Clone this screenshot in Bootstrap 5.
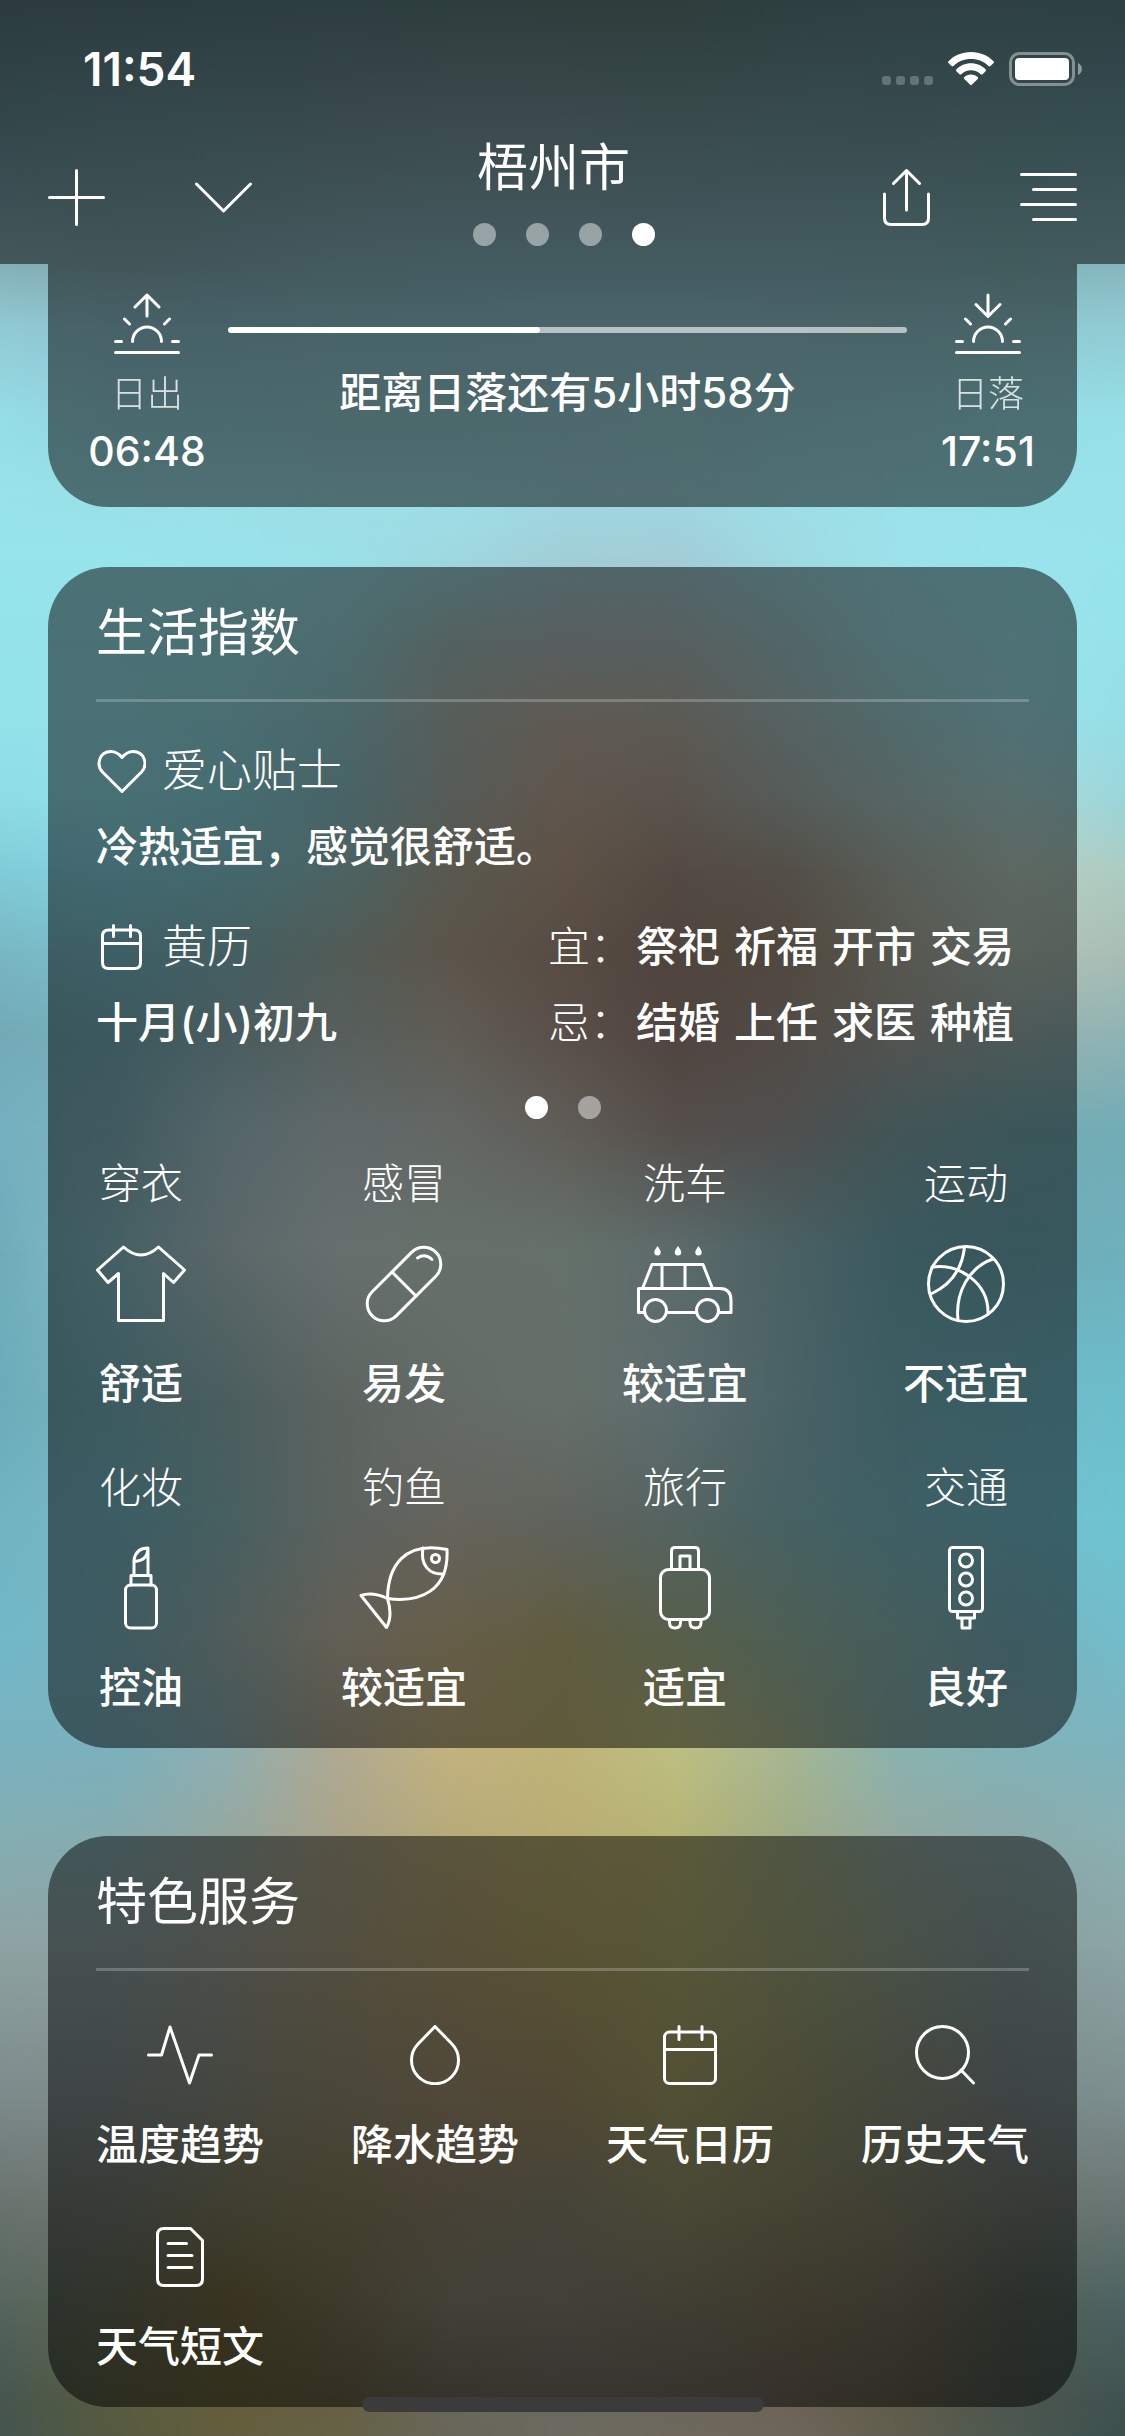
<!DOCTYPE html>
<html lang="zh-CN">
<head>
<meta charset="utf-8">
<meta name="viewport" content="width=device-width, initial-scale=1">
<title>天气</title>
<link href="https://cdn.jsdelivr.net/npm/bootstrap@5.3.0/dist/css/bootstrap.min.css" rel="stylesheet">
<script src="https://cdn.jsdelivr.net/npm/bootstrap@5.3.0/dist/js/bootstrap.bundle.min.js"></script>
<style>
  body { font-family: Inter, "Noto Sans CJK SC", sans-serif; color: #fff; background: #3b4b4c; font-size: 42px; line-height: 60px; }
  svg { fill: none; stroke: #fff; stroke-width: 3; stroke-linecap: round; stroke-linejoin: round; display: block; flex: none; }
  .thin { font-weight: 300; }
  .medium { font-weight: 500; }

  /* blurred photo behind everything: stacked colour bands that fade into each other */
  .screen { isolation: isolate; }
  .sky { position: absolute; inset: 0; z-index: -1; overflow: hidden; }
  .sky div { position: absolute; left: 0; right: 0; bottom: 0; }

  .app-top { background: rgba(0,0,0,.5); height: 264px; }
  .status { padding: 39px 43px 0 83px; }
  .status-icons { gap: 15px; }
  .clock { font-size: 46px; font-weight: 600; }
  .tools { padding: 39px 48px 0; }
  .tool-group { gap: 90px; }
  .tool { border: 0; background: none; padding: 0; color: inherit; }
  .city { padding-bottom: 11px; }
  .city-name { padding-right: 20px; margin-bottom: 25px; }
  .big { font-size: 51px; line-height: 60px; font-weight: 400; }
  .dots { gap: 30px; }
  .dot { width: 23px; height: 23px; border-radius: 50%; background: rgba(255,255,255,.45); border: 0; padding: 0; }
  .dot.on { background: #fff; }

  .panel { margin: 0 48px 60px; background: rgba(0,0,0,.5); border-radius: 60px; padding: 36px 48px 30px; }
  .panel-sun { border-radius: 0 0 60px 60px; padding: 29px 30px 26px 40px; }
  .panel-life { margin-bottom: 88px; }
  .panel-service { margin-bottom: 29px; }
  .sun-side { width: 118px; }
  .sun-name { font-size: 36px; line-height: 54px; opacity: .8; margin-top: 12px; }
  .sun-time { font-size: 41px; font-weight: 500; }
  .sun-mid { padding: 34px 22px 0; }
  .track { height: 6px; border-radius: 3px; background: rgba(255,255,255,.6); margin-bottom: 30px; }
  .track .progress-bar { background: #fff; border-radius: 3px; }

  .rule { height: 3px; background: rgba(255,255,255,.22); margin-top: 36px; }
  .sub { font-size: 45px; gap: 16px; }
  .tips { margin-top: 39px; }
  .second { margin-top: 16px; }
  .almanac-row { margin-top: 40px; padding-right: 15px; }
  .words { gap: 14px; }
  .pager { margin: 43px 0 35px; }
  .four { display: grid; grid-template-columns: repeat(4, auto); justify-content: space-between; text-align: center; }
  .four-index { row-gap: 44px; }
  .four-service { row-gap: 52px; margin-top: 54px; }
  .pic { height: 140px; }
  .service { color: #fff; text-decoration: none; }
  .service svg { margin: 0 auto 30px; }
  .home-bar { position: absolute; bottom: 24px; left: 0; right: 0; margin: 0 auto; width: 402px; height: 15px; border-radius: 8px; background: #3c3b3c; }
</style>
</head>
<body>
<div class="screen position-relative overflow-hidden">
  <div class="sky" id="sky" aria-hidden="true"></div>

  <header class="app-top">
    <div class="status d-flex align-items-center justify-content-between">
      <div class="clock">11:54</div>
      <div class="status-icons d-flex align-items-center">
        <svg width="51" height="34" viewBox="0 0 51 34"><g fill="#fff" fill-opacity=".24" stroke="none"><rect x="0" y="24" width="9" height="9" rx="3"/><rect x="14" y="24" width="9" height="9" rx="3"/><rect x="28" y="24" width="9" height="9" rx="3"/><rect x="42" y="24" width="9" height="9" rx="3"/></g></svg>
        <svg width="46" height="34" viewBox="0 0 46 34"><g fill="#fff" stroke="none"><path d="M23 0C32 0 40 3.500 45.500 9.200q.9 1 0 1.900l-3 3q-.9.800-1.900 0C36 9.500 30 7 23 7S10 9.500 5.400 14.100q-1 .8-1.900 0l-3-3q-.9-.9 0-1.900C6 3.500 14 0 23 0z"/><path d="M23 11.300c5.700 0 10.800 2.300 14.600 6q.9.900 0 1.900l-3 3q-.9.800-1.900 0C30 19.700 27 18.200 23 18.200s-7 1.500-9.700 4q-1 .8-1.900 0l-3-3q-.9-1 0-1.900c3.800-3.700 8.900-6 14.600-6z"/><path d="M23 22.500c2.600 0 4.900 1 6.700 2.600q.9.900 0 1.800l-5.900 5.900q-.8.700-1.600 0l-5.900-5.900q-.9-.9 0-1.800c1.800-1.600 4.100-2.600 6.700-2.600z"/></g></svg>
        <svg width="73" height="34" viewBox="0 0 73 34"><rect x="1.500" y="1.500" width="63" height="31" rx="9" stroke-opacity=".4"/><rect x="6" y="6" width="54" height="22" rx="4" fill="#fff" stroke="none"/><path d="M69 11c2.500 1.200 4 3.500 4 6s-1.500 4.800-4 6z" fill="#fff" fill-opacity=".45" stroke="none"/></svg>
      </div>
    </div>
    <div class="tools d-flex align-items-center justify-content-between">
      <div class="tool-group d-flex align-items-center">
        <button class="tool" type="button" aria-label="添加"><svg width="57" height="57" viewBox="0 0 57 57"><path d="M28.500 1.500v54M1.500 28.500h54"/></svg></button>
        <button class="tool" type="button" aria-label="展开"><svg width="57" height="57" viewBox="0 0 57 57"><path d="M1.500 15l27 27 27-27"/></svg></button>
      </div>
      <div class="city d-flex flex-column align-items-center me-2">
        <h1 class="big city-name">梧州市</h1>
        <div class="dots d-flex"><span class="dot"></span><span class="dot"></span><span class="dot"></span><span class="dot on"></span></div>
      </div>
      <div class="tool-group d-flex align-items-center">
        <button class="tool" type="button" aria-label="分享"><svg width="47" height="57" viewBox="0 0 47 57"><path d="M23.500 41V1.500M10.500 14.500l13-13 13 13M1.500 25v24q0 6.500 6.500 6.500h31q6.500 0 6.500-6.500V25"/></svg></button>
        <button class="tool" type="button" aria-label="菜单"><svg width="57" height="57" viewBox="0 0 57 57"><path d="M1.500 5.500h54M13.500 20.500h42M1.500 35.500h54M13.500 50.500h42"/></svg></button>
      </div>
    </div>
  </header>

  <main>
    <section class="panel panel-sun d-flex">
      <div class="sun-side text-center">
        <svg class="mx-auto" width="66" height="62" viewBox="0 0 66 62"><path d="M1.500 59.500h63M1.500 48.500h6M58.500 48.500h6M18.500 48.500a14.500 14.500 0 0 1 29 0M10.500 26l5 5M55.500 26l-5 5M33 23V2M21 14L33 2l12 12"/></svg>
        <div class="sun-name thin">日出</div>
        <div class="sun-time">06:48</div>
      </div>
      <div class="sun-mid flex-grow-1 text-center">
        <div class="track progress" role="progressbar" aria-label="日照进度" aria-valuenow="46" aria-valuemin="0" aria-valuemax="100"><div class="progress-bar" style="width:46%"></div></div>
        <div class="medium">距离日落还有5小时58分</div>
      </div>
      <div class="sun-side text-center">
        <svg class="mx-auto" width="66" height="62" viewBox="0 0 66 62"><path d="M1.500 59.500h63M1.500 48.500h6M58.500 48.500h6M18.500 48.500a14.500 14.500 0 0 1 29 0M10.500 26l5 5M55.500 26l-5 5M33 2v21M21 11.500l12 12 12-12"/></svg>
        <div class="sun-name thin">日落</div>
        <div class="sun-time">17:51</div>
      </div>
    </section>

    <section class="panel panel-life">
      <h2 class="big mb-0">生活指数</h2>
      <div class="rule"></div>
      <div class="tips sub thin d-flex align-items-center"><svg width="50" height="44" viewBox="0 0 50 44"><path d="M26 42.500L6.500 23C0 16 3 2.500 15 2.500c5 0 8 2.500 11 6 3-3.500 6-6 11-6 12 0 15 13.500 8.500 20.500z"/></svg><span>爱心贴士</span></div>
      <div class="medium second">冷热适宜，感觉很舒适。</div>
      <div class="almanac-row d-flex justify-content-between">
        <div>
          <div class="sub thin d-flex align-items-center"><svg width="50" height="46" viewBox="0 0 50 46"><path d="M6.500 19.500h38M17.500 1.500v11M34.500 1.500v11M12.500 6h26q6 0 6 6v26.500q0 6-6 6h-26q-6 0-6-6V12q0-6 6-6z"/></svg><span>黄历</span></div>
          <div class="medium second">十月(小)初九</div>
        </div>
        <div>
          <div class="d-flex"><span class="thin me-1">宜：</span><div class="words medium d-flex"><span>祭祀</span><span>祈福</span><span>开市</span><span>交易</span></div></div>
          <div class="second d-flex"><span class="thin me-1">忌：</span><div class="words medium d-flex"><span>结婚</span><span>上任</span><span>求医</span><span>种植</span></div></div>
        </div>
      </div>
      <div class="pager dots d-flex justify-content-center"><span class="dot on"></span><span class="dot"></span></div>

      <div class="four four-index">
        <div>
          <div class="thin">穿衣</div>
          <div class="pic d-flex align-items-center justify-content-center"><svg width="90" height="78" viewBox="0 0 90 78"><path d="M27.500 2L1.500 25 12 37.500l10.500-9v47h45v-47l10 9L88.500 25 62.500 2Q45 18 27.500 2z"/></svg></div>
          <div class="medium">舒适</div>
        </div>
        <div>
          <div class="thin">感冒</div>
          <div class="pic d-flex align-items-center justify-content-center"><svg width="78" height="78" viewBox="0 0 78 78"><g transform="rotate(-45 39 39)"><rect x="-6" y="22" width="90" height="34" rx="17"/><path d="M39 22v34"/></g><path d="M52.500 13q7.500-5 14.500 1.500"/></svg></div>
          <div class="medium">易发</div>
        </div>
        <div>
          <div class="thin">洗车</div>
          <div class="pic d-flex align-items-center justify-content-center"><svg width="96" height="78" viewBox="0 0 96 78"><path d="M5.500 43.500l9.500-24h51l9.500 24M25 19.500v24M48 19.500v24M7 67.500H1.500v-24H83q11 0 11 12v12H82M59 67.500H30"/><circle cx="18.500" cy="65.500" r="11"/><circle cx="70.500" cy="65.500" r="11"/><g fill="#fff" stroke="none"><path d="M20.500 1c1.500 2.500 3.200 4 3.200 6.200a3.200 3.200 0 0 1-6.400 0C17.300 5 19 3.500 20.500 1z"/><path d="M41 1c1.500 2.500 3.200 4 3.200 6.200a3.200 3.200 0 0 1-6.400 0C37.800 5 39.500 3.500 41 1z"/><path d="M61.500 1c1.500 2.500 3.200 4 3.200 6.200a3.200 3.200 0 0 1-6.400 0C58.300 5 60 3.500 61.500 1z"/></g></svg></div>
          <div class="medium">较适宜</div>
        </div>
        <div>
          <div class="thin">运动</div>
          <div class="pic d-flex align-items-center justify-content-center"><svg width="78" height="78" viewBox="0 0 78 78"><circle cx="39" cy="39" r="37.500"/><path d="M37.500 2Q34 35 4 49M5 22C32 18 62 38 61 69M66 14C42 22 28 48 31 75"/></svg></div>
          <div class="medium">不适宜</div>
        </div>
        <div>
          <div class="thin">化妆</div>
          <div class="pic d-flex align-items-center justify-content-center"><svg width="34" height="84" viewBox="0 0 34 84"><rect x="1.500" y="39" width="31" height="43" rx="5"/><path d="M7 39v-9.500h20V39M10 29.500V14Q12 2 24 2v27.500M24 3q-1 12-13.500 12.500"/></svg></div>
          <div class="medium">控油</div>
        </div>
        <div>
          <div class="thin">钓鱼</div>
          <div class="pic d-flex align-items-center justify-content-center"><svg width="90" height="84" viewBox="0 0 90 84"><path d="M88 3.500C45-5 29 20 28.500 52.500M88 3.500C90 44 62 57 28.500 52.500 19 48 9 47 2 49.500l25.500 32Q34 70 28.500 52.500M64 2C61 20 71 29 85 28"/><circle cx="76.500" cy="12.500" r="4"/></svg></div>
          <div class="medium">较适宜</div>
        </div>
        <div>
          <div class="thin">旅行</div>
          <div class="pic d-flex align-items-center justify-content-center"><svg width="52" height="84" viewBox="0 0 52 84"><rect x="1.500" y="23.500" width="49" height="50" rx="8"/><path d="M12.500 23.500V5q0-3.500 3.500-3.500h20q3.500 0 3.500 3.500v18.500M21 23.500V10h10v13.500M10.500 73.500v3q0 5.500 5.500 5.500t5.500-5.500v-3M31 73.500v3q0 5.500 5.500 5.500t5.500-5.500v-3"/></svg></div>
          <div class="medium">适宜</div>
        </div>
        <div>
          <div class="thin">交通</div>
          <div class="pic d-flex align-items-center justify-content-center"><svg width="36" height="84" viewBox="0 0 36 84"><rect x="1.500" y="1.500" width="33" height="64" rx="3"/><circle cx="18" cy="14.500" r="6.500"/><circle cx="18" cy="33.500" r="6.500"/><circle cx="18" cy="52.500" r="6.500"/><path d="M9.500 65.500V72h17v-6.500M14 72v10h8V72"/></svg></div>
          <div class="medium">良好</div>
        </div>
      </div>
    </section>

    <section class="panel panel-service">
      <h2 class="big mb-0">特色服务</h2>
      <div class="rule"></div>
      <div class="four four-service medium">
        <a class="service" href="#"><svg width="66" height="60" viewBox="0 0 66 60"><path d="M1.500 30H14.500L23 2l19.500 56L52 30h12.500"/></svg>温度趋势</a>
        <a class="service" href="#"><svg width="50" height="60" viewBox="0 0 50 60"><path d="M25 1.500L8.500 18.500a23.500 23.500 0 1 0 33 0z"/></svg>降水趋势</a>
        <a class="service" href="#"><svg width="54" height="60" viewBox="0 0 54 60"><rect x="1.500" y="7" width="51" height="51.500" rx="5"/><path d="M1.500 24.500h51M16 1.500v13M39 1.500v13"/></svg>天气日历</a>
        <a class="service" href="#"><svg width="60" height="60" viewBox="0 0 60 60"><circle cx="27.500" cy="27.500" r="26"/><path d="M46 45l12.500 13"/></svg>历史天气</a>
        <a class="service" href="#"><svg width="48" height="60" viewBox="0 0 48 60"><path d="M8 1.500h26.500l12 12V52q0 6.500-6.500 6.500H8Q1.500 58.500 1.500 52V8Q1.500 1.500 8 1.500zM12 16.500h18.500M12 28.500h24M12 40.500h24"/></svg>天气短文</a>
      </div>
    </section>
  </main>
  <div class="home-bar"></div>
</div>
<script>
  // [height in % of the page, colours from left to right at half brightness]
  const bands = [
    [0,    "2c3b3e 2c3c40 2c3d41 2d3d40 2e3e3e 2e3e3c 2e3e3c 2e3f40 2e4044 2e4044 2d4043"],
    [4.9,  "33474b 35484c 36494c 39494c 3b4a4d 3b4a4d 394a4c 384b4d 374b4e 364c4f 354c50"],
    [10.8, "42585b 425658 42575b 445a5e 445b60 445b60 445b60 445b60 435b5f 425b5d 435b5f"],
    [13.5, "48656a 48626a 476268 486468 486469 4a6569 4a6569 4a6469 496468 486568 48666a"],
    [17.2, "4a6f73 4a6a6e 4a6a6e 4c696c 4c696c 4d696d 4d6a6d 4c6b6e 4c6d70 4b6f73 4b7074"],
    [20.5, "4c7175 4d7074 4e7074 4f6f72 4f6f73 506c71 506c70 4f6f73 4e7175 4d7175 4c7175"],
    [23,   "4b7276 4c7276 4c7175 4d7074 4f6c70 51676b 51666b 4f6d71 4e7175 4d7276 4c7276"],
    [26.3, "4a7175 4a7175 4a7074 4d6c6f 53625f 575f5f 57605f 526668 4f6f72 4e7276 4b7175"],
    [29.6, "4a7175 4a7175 4a6e72 4b686a 575e5a 5f5a53 5c5a54 566261 516a6b 507175 4a6f73"],
    [32.8, "476e73 477075 466d72 476467 565b57 60564d 5a534c 565c59 566664 586d6c 4d6b6d"],
    [35.7, "40666c 426a70 44686d 4b6463 59594f 5e5247 544a43 534f48 585e58 5d6862 566661"],
    [39,   "3c5c62 3d6066 435f62 515c57 5c554b 584c43 4f453e 51493f 575850 59625c 555f5a"],
    [42.3, "39555b 3b595e 485c5f 565f5c 5f5c54 5a4f49 50443f 524b46 535450 4e5a58 485a5a"],
    [46.4, "3a5860 40595e 54666a 60696a 636764 605d58 554f4b 4e4f4e 425557 3b5659 39565b"],
    [51.3, "37565d 446064 5b6769 66706e 66716a 65716a 5c6b6a 4a6164 3a595e 37575c 37585e"],
    [57.5, "36565d 3c5b60 4a5e5e 5d6460 646b66 667069 5c6c6e 4a6266 3b5d62 3a5d64 365f66"],
    [62.4, "395a61 3b5d63 475f60 5c635f 65645d 60635d 556461 466163 3e6065 3b6068 376269"],
    [67.3, "385c64 3e5b61 4f5c5b 625f55 665e48 605c3f 575f49 4e5f54 465d5c 3d5a60 395e65"],
    [71.4, "3d5960 3d595f 47585a 58554a 625a40 605a3c 5f6042 545c4a 445a58 405a5d 3e5a5f"],
    [75.5, "425759 435658 4b5450 555245 5b553d 5d573a 5b5a3a 505643 4a5551 465555 455859"],
    [80,   "475151 475151 4d4f4a 534f40 574f38 595334 575638 50543d 495148 444f4f 465252"],
    [86.2, "3e4545 3f4544 44463f 4a4739 504839 504834 525034 4a4b36 43473c 3e4444 3e4747"],
    [90.3, "353a38 383c38 3f3f31 45412f 474236 464439 494936 444533 3f4035 383c38 353b3a"],
    [94.4, "2b332f 31342b 383420 3e3a2b 434138 42413a 403f34 3e3a2e 39372e 2c302b 263231"],
    [98.5, "232b27 2c2e20 322f1d 333022 35342c 363530 36342f 36322b 302e25 262b27 202928"],
    [100,  "232b27 2b2d21 322f1f 333123 34332d 363530 37342e 37332d 302f27 262c28 1e2827"]
  ];
  const full = hex => "rgb(" + [0, 2, 4].map(i => Math.min(255, 2 * parseInt(hex.substr(i, 2), 16))).join() + ")";
  bands.forEach(([at, row], i) => {
    const from = i ? bands[i - 1][0] : 0;
    const band = document.createElement("div");
    band.style.top = from + "%";
    band.style.background = "linear-gradient(90deg," + row.split(" ").map(full).join() + ")";
    if (i) {
      const fade = "linear-gradient(transparent,#000 " + (at - from) / (100 - from) * 100 + "%)";
      band.style.webkitMaskImage = fade;
      band.style.maskImage = fade;
    }
    document.getElementById("sky").append(band);
  });
</script>
</body>
</html>
